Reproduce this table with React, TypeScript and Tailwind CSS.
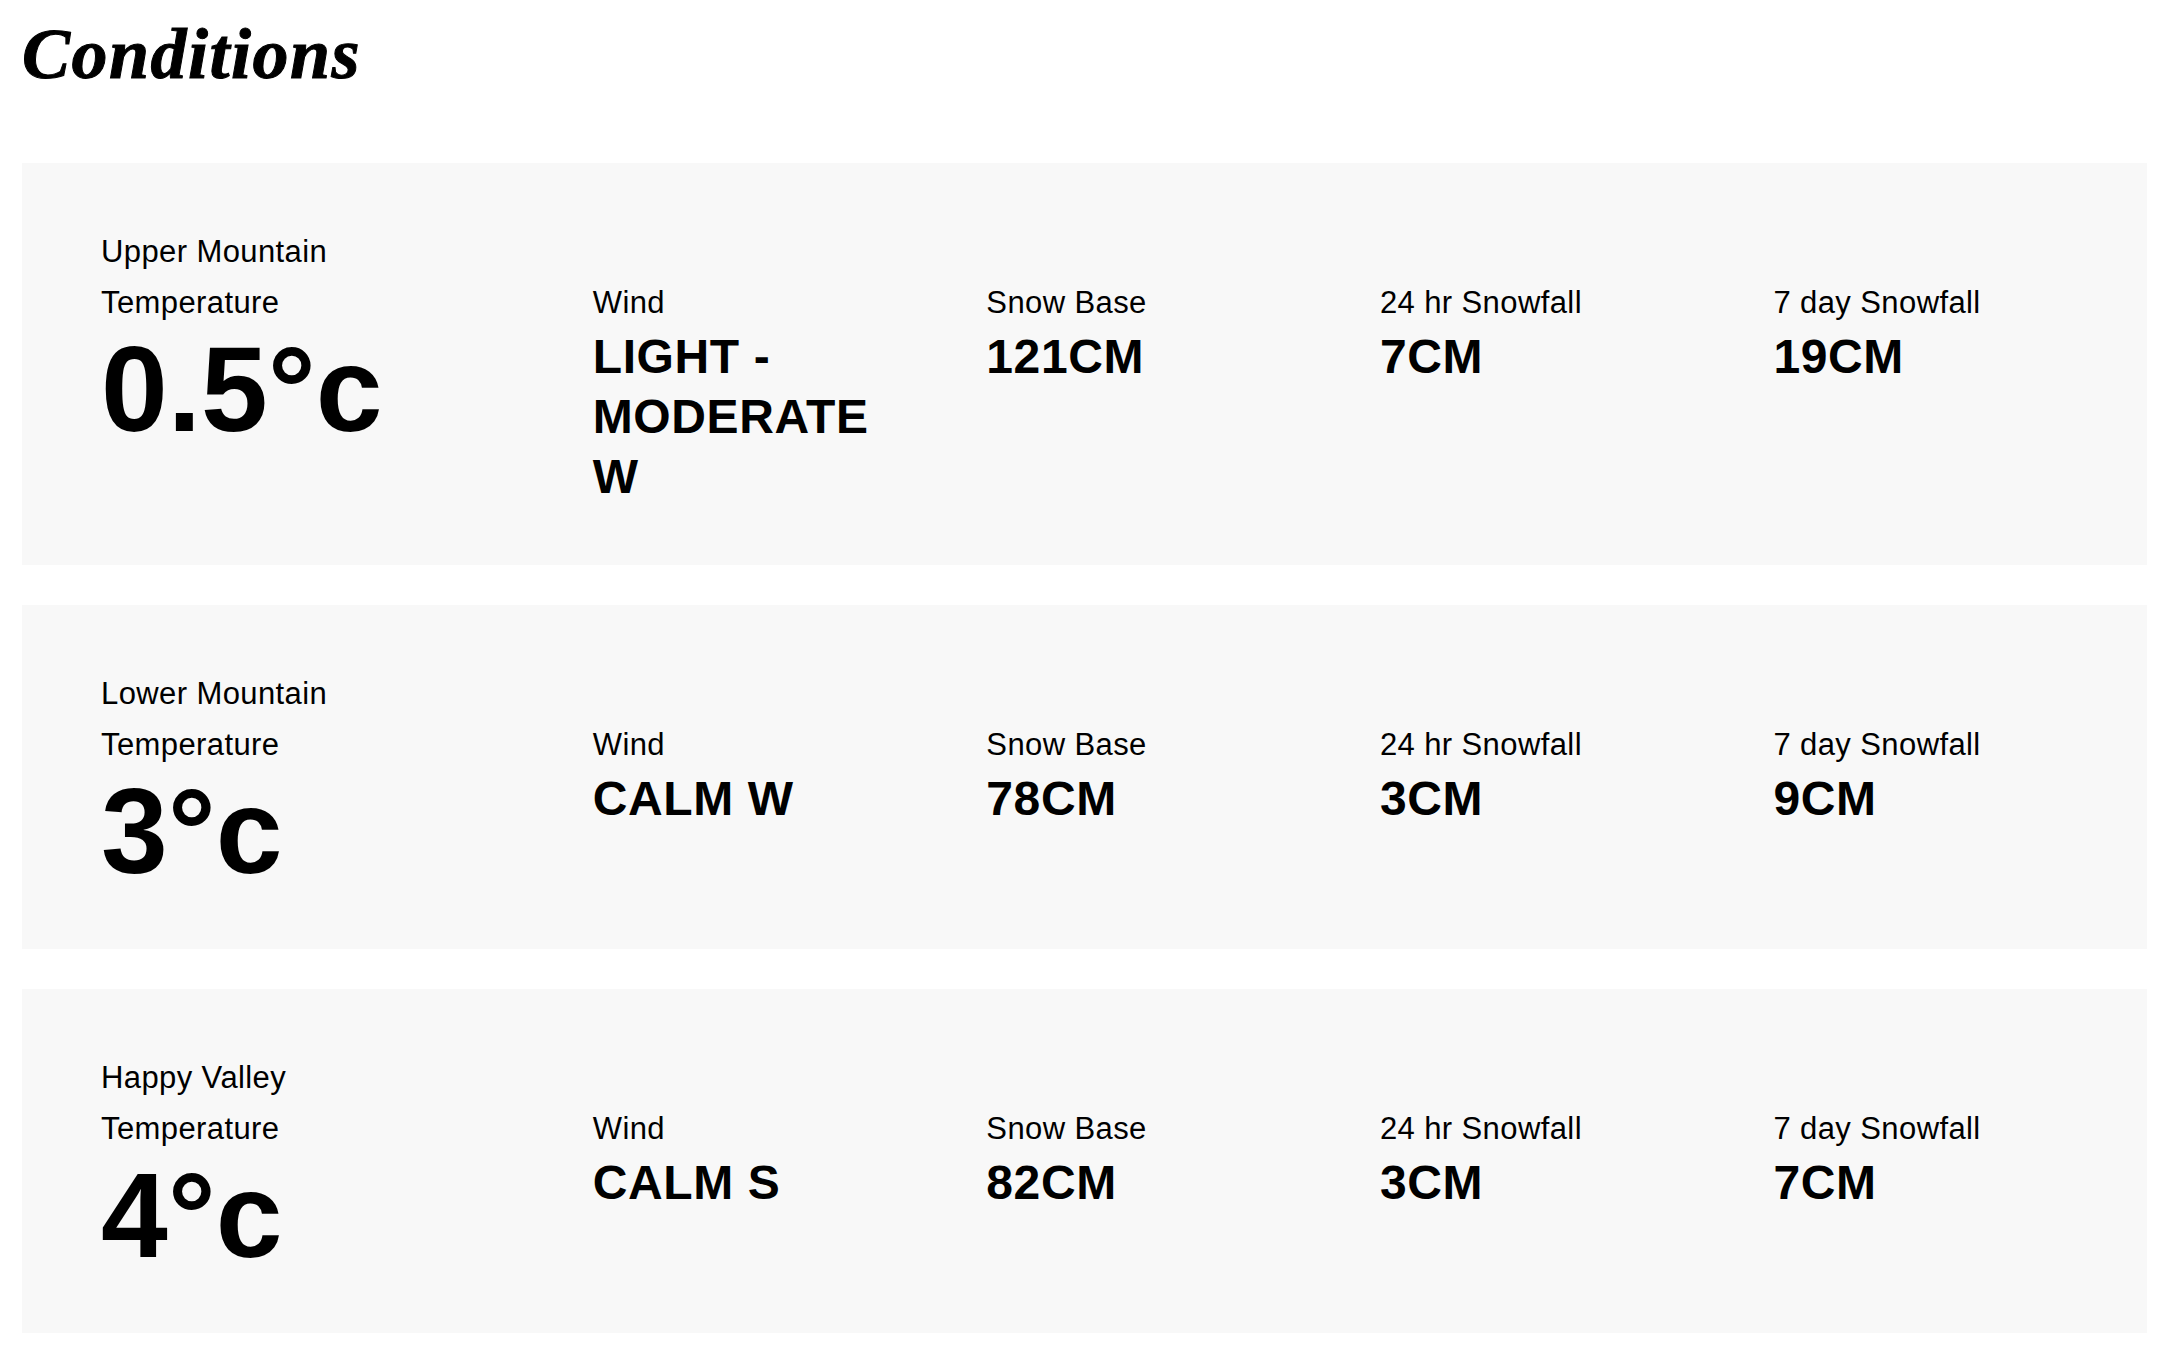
const areas = [
  { name: 'Upper Mountain', temp: '0.5°c', wind: 'LIGHT - MODERATE W', base: '121CM', day: '7CM', week: '19CM' },
  { name: 'Lower Mountain', temp: '3°c', wind: 'CALM W', base: '78CM', day: '3CM', week: '9CM' },
  { name: 'Happy Valley', temp: '4°c', wind: 'CALM S', base: '82CM', day: '3CM', week: '7CM' },
];

type Area = (typeof areas)[number];

function AreaCard({ area }: { area: Area }) {
  const stats = [
    { label: 'Wind', value: area.wind },
    { label: 'Snow Base', value: area.base },
    { label: '24 hr Snowfall', value: area.day },
    { label: '7 day Snowfall', value: area.week },
  ];

  return (
    <section className="bg-[#f8f8f8] px-[79px] pt-[70px] pb-[58px]">
      <div className="grid grid-cols-[4fr_3fr_3fr_3fr_3fr] gap-x-[99px]">
        <h3 className="col-span-5 mb-[14px] text-[31px] leading-[37px] tracking-[0.4px]">{area.name}</h3>

        {/* Temperature */}
        <div>
          <p className="text-[31px] leading-[37px] tracking-[0.4px]">Temperature</p>
          <p className="mt-2 text-[120px] font-bold leading-none">{area.temp}</p>
        </div>

        {stats.map((s) => (
          <div key={s.label}>
            <p className="text-[31px] leading-[37px] tracking-[0.4px]">{s.label}</p>
            <p className="mt-[6px] text-[48px] font-bold leading-[60px] tracking-[0.6px]">{s.value}</p>
          </div>
        ))}
      </div>
    </section>
  );
}

export default function App() {
  return (
    <div className="min-h-screen bg-white px-[22px] pt-[18px] font-['Liberation_Sans',Arial,sans-serif] text-black">
      <h2 className="mb-[73px] font-['Liberation_Serif','Times_New_Roman',serif] text-[72px] font-bold italic leading-none tracking-[1.5px] [-webkit-text-stroke:1px_black]">
        Conditions
      </h2>

      <div className="flex flex-col gap-10">
        {areas.map((area) => (
          <AreaCard key={area.name} area={area} />
        ))}
      </div>
    </div>
  );
}
